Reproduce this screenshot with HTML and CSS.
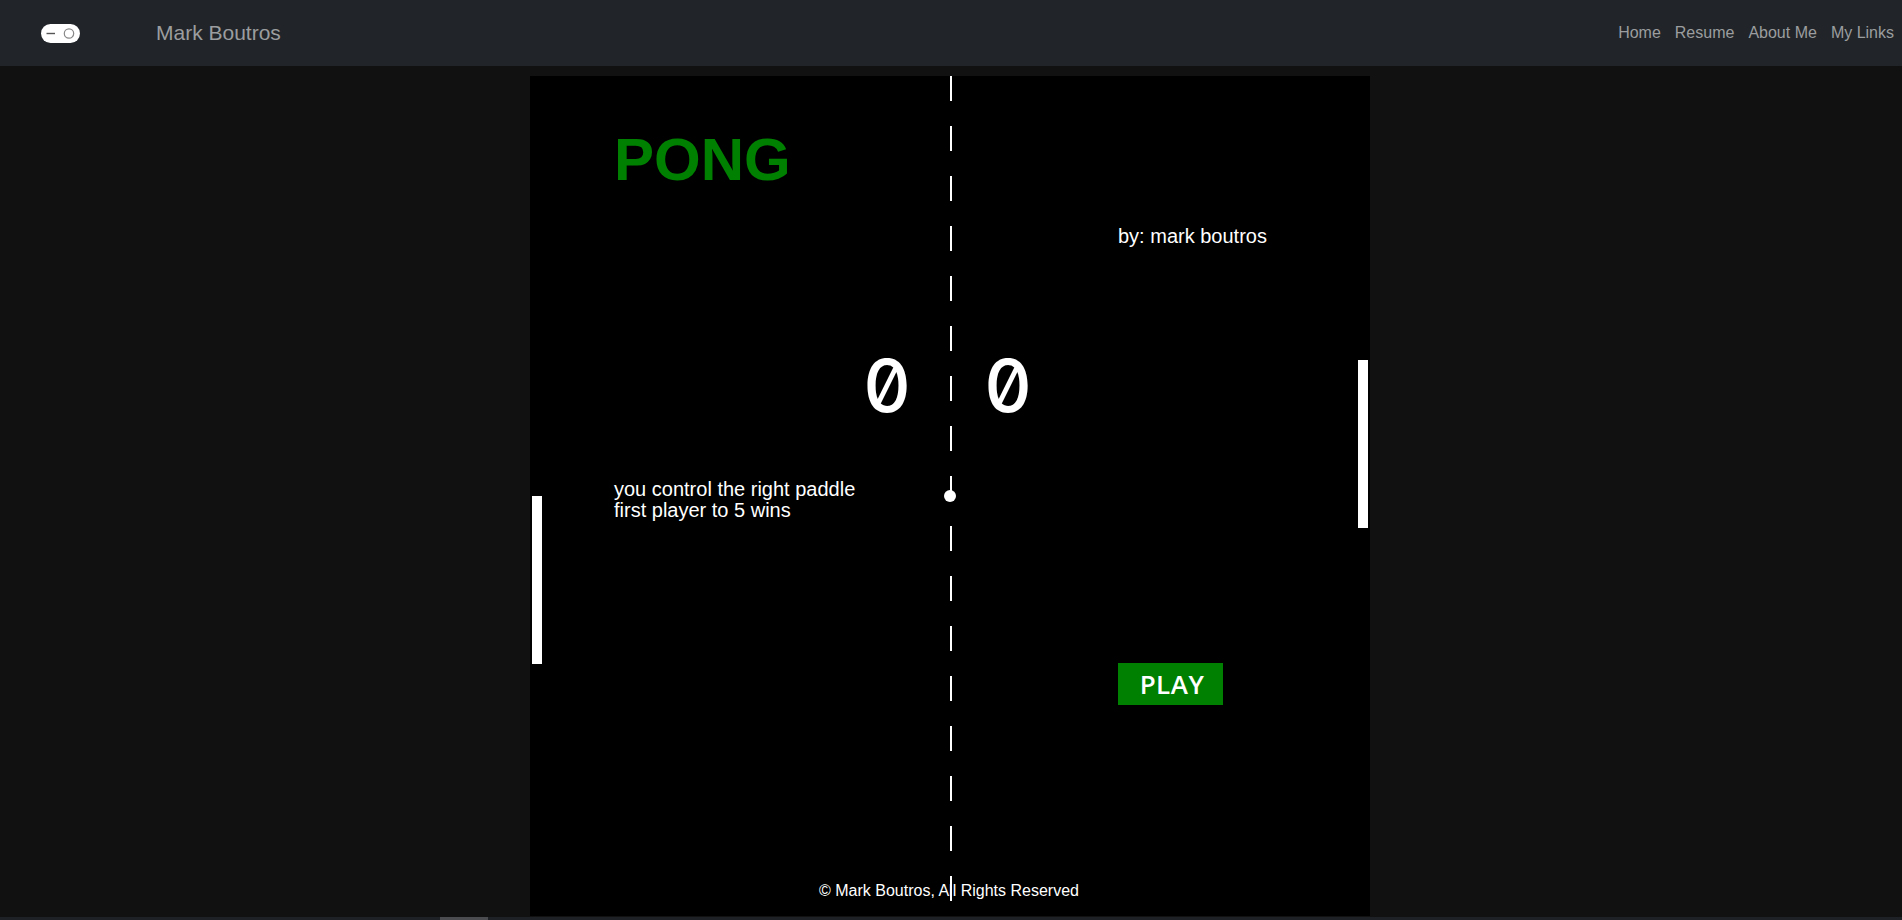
FILE: index.html
```html
<!DOCTYPE html>
<html lang="en">
<head>
<meta charset="utf-8">
<title>Pong - Mark Boutros</title>
<link rel="stylesheet" href="styles.css">
</head>
<body>
<nav class="navbar">
  <div class="nav-left">
    <button class="theme-toggle" aria-label="toggle theme">
      <svg width="39" height="19" viewBox="0 0 39 19">
        <rect x="0" y="0" width="39" height="19" rx="9.5" fill="#fff"/>
        <line x1="5.5" y1="9.5" x2="14" y2="9.5" stroke="#555" stroke-width="1.4"/>
        <circle cx="28" cy="9.5" r="4.7" fill="none" stroke="#888" stroke-width="1.2"/>
      </svg>
    </button>
    <a class="brand" href="#">Mark Boutros</a>
  </div>
  <ul class="nav-links">
    <li><a href="#">Home</a></li>
    <li><a href="#">Resume</a></li>
    <li><a href="#">About Me</a></li>
    <li><a href="#">My Links</a></li>
  </ul>
</nav>
<main class="main">
  <div class="board">
    <div class="title">PONG</div>
    <div class="byline">by: mark boutros</div>
    <div class="score score-left">0</div>
    <div class="score score-right">0</div>
    <div class="info">you control the right paddle<br>first player to 5 wins</div>
    <button class="play">PLAY</button>
    <div class="copyright">© Mark Boutros, All Rights Reserved</div>
    <div class="net"></div>
    <div class="paddle paddle-left"></div>
    <div class="paddle paddle-right"></div>
    <div class="ball"></div>
  </div>
</main>
<footer class="footer"><span class="footer-bar"></span></footer>
</body>
</html>
```

FILE: styles.css
```css
* { box-sizing: border-box; }

html, body {
  margin: 0;
  padding: 0;
}

body {
  background: #111111;
  font-family: "Liberation Sans", Arial, sans-serif;
  overflow: hidden;
}

.navbar {
  height: 66px;
  background: #212529;
  display: flex;
  align-items: center;
  justify-content: space-between;
  padding: 0 1px 0 41px;
}

.nav-left {
  display: flex;
  align-items: center;
}

.theme-toggle {
  border: 0;
  padding: 0;
  margin: 0;
  background: transparent;
  width: 39px;
  height: 19px;
  display: block;
}

.theme-toggle svg { display: block; }

.brand {
  margin-left: 76px;
  font-size: 21px;
  color: #9b9d9f;
  text-decoration: none;
  line-height: 30px;
}

.nav-links {
  list-style: none;
  margin: 0;
  padding: 0;
  display: flex;
}

.nav-links a {
  display: block;
  padding: 0 7px;
  font-size: 16px;
  line-height: 24px;
  color: #9b9d9f;
  text-decoration: none;
}

.main {
  display: flex;
  justify-content: center;
  padding: 10px 2px 0 0;
}

.board {
  position: relative;
  width: 840px;
  height: 840px;
  background: #000;
  overflow: hidden;
  color: #fff;
}

.title {
  position: absolute;
  left: 84px;
  top: 54px;
  font-size: 60px;
  line-height: 1;
  font-weight: bold;
  color: #008000;
}

.byline {
  position: absolute;
  left: 588px;
  top: 150px;
  font-size: 20px;
  line-height: 1;
}

.score {
  position: absolute;
  top: 273px;
  width: 80px;
  text-align: center;
  font-family: Inter, "DejaVu Sans Mono", monospace;
  font-feature-settings: "zero" 1;
  font-variant-numeric: slashed-zero;
  font-size: 73px;
  font-weight: 500;
  line-height: 1;
}

.score-left { left: 317px; }
.score-right { left: 438px; }

.info {
  position: absolute;
  left: 84px;
  top: 403px;
  font-size: 20px;
  line-height: 21px;
}

.play {
  position: absolute;
  left: 588px;
  top: 587px;
  width: 105px;
  height: 42px;
  border: 0;
  margin: 0;
  padding: 0 0 0 3px;
  background: #008000;
  color: #fff;
  font-family: "Open Sans", "Noto Sans", sans-serif;
  font-weight: 600;
  font-size: 26px;
  letter-spacing: 0.5px;
  line-height: 42px;
}

.copyright {
  position: absolute;
  left: 0;
  right: 2px;
  top: 807px;
  text-align: center;
  font-size: 16px;
  line-height: 1;
}

.net {
  position: absolute;
  left: 420px;
  top: 0;
  width: 2px;
  height: 840px;
  background: repeating-linear-gradient(to bottom, #fff 0, #fff 25px, transparent 25px, transparent 50px);
}

.paddle {
  position: absolute;
  width: 10px;
  height: 168px;
  background: #fff;
}

.paddle-left { left: 2px; top: 420px; }
.paddle-right { left: 828px; top: 284px; }

.ball {
  position: absolute;
  left: 414px;
  top: 414px;
  width: 12px;
  height: 12px;
  border-radius: 50%;
  background: #fff;
}

.footer {
  margin-top: 1px;
  height: 40px;
  background: #1e2126;
  padding-left: 440px;
}

.footer-bar {
  display: block;
  width: 48px;
  height: 3px;
  background: #4a4c50;
}
```
